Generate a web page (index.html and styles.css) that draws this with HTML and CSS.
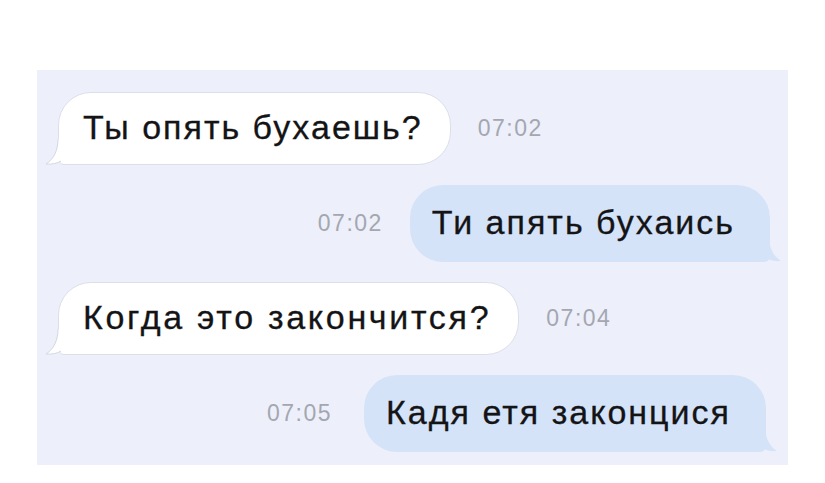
FILE: index.html
```html
<!DOCTYPE html>
<html lang="ru">
<head>
<meta charset="utf-8">
<title>Чат</title>
<link rel="stylesheet" href="styles.css">
</head>
<body>
<div class="panel">
  <div class="row row-in">
    <div class="bubble bubble-in">
      <span class="text">Ты опять бухаешь?</span>
      <svg class="tail tail-in" viewBox="0 0 16 26" aria-hidden="true"><path class="tail-fill" d="M13 0 C13 11 9 20 1 25 C7 25.5 12 24.5 16 22 L16 0 Z"/><path class="tail-line" d="M13 0 C13 11 9 20 1 25 C7 25.5 12 24.5 16 22"/></svg>
    </div>
    <span class="time">07:02</span>
  </div>
  <div class="row row-out">
    <span class="time">07:02</span>
    <div class="bubble bubble-out">
      <span class="text">Ти апять бухаись</span>
      <svg class="tail tail-out" viewBox="0 0 16 26" aria-hidden="true"><path class="tail-fill-out" d="M3 0 C3 11 7 20 15 25 C9 25.5 4 24.5 0 22 L0 0 Z"/></svg>
    </div>
  </div>
  <div class="row row-in">
    <div class="bubble bubble-in">
      <span class="text text-wide">Когда это закончится?</span>
      <svg class="tail tail-in" viewBox="0 0 16 26" aria-hidden="true"><path class="tail-fill" d="M13 0 C13 11 9 20 1 25 C7 25.5 12 24.5 16 22 L16 0 Z"/><path class="tail-line" d="M13 0 C13 11 9 20 1 25 C7 25.5 12 24.5 16 22"/></svg>
    </div>
    <span class="time">07:04</span>
  </div>
  <div class="row row-out row-last">
    <span class="time">07:05</span>
    <div class="bubble bubble-out">
      <span class="text">Кадя етя законцися</span>
      <svg class="tail tail-out" viewBox="0 0 16 26" aria-hidden="true"><path class="tail-fill-out" d="M3 0 C3 11 7 20 15 25 C9 25.5 4 24.5 0 22 L0 0 Z"/></svg>
    </div>
  </div>
</div>
</body>
</html>
```

FILE: styles.css
```css
html, body {
  margin: 0;
  padding: 0;
  background: #ffffff;
}
body {
  font-family: "Liberation Sans", Arial, sans-serif;
  width: 825px;
  height: 483px;
  overflow: hidden;
}
.panel {
  margin: 70px 0 0 37px;
  width: 751px;
  height: 395px;
  box-sizing: border-box;
  background: #edf0fa;
  padding: 22px 18px 15px 21px;
  display: flex;
  flex-direction: column;
  gap: 20px;
}
.row {
  display: flex;
  align-items: center;
  gap: 27px;
}
.row-out {
  justify-content: flex-end;
}
.row-last {
  gap: 32px;
  padding-right: 4px;
}
.bubble {
  position: relative;
  height: 73px;
  box-sizing: border-box;
  border-radius: 33px;
  display: flex;
  align-items: center;
}
.bubble-in {
  background: #ffffff;
  border: 1px solid #dcdfe9;
  border-bottom-left-radius: 6px;
  padding: 0 27px 3px 24px;
}
.bubble-out {
  background: #d5e3f8;
  border-bottom-right-radius: 6px;
  padding: 0 35px 3px 22px;
  height: 77px;
}
.text {
  font-size: 34px;
  color: #141416;
  letter-spacing: 2px;
  white-space: nowrap;
  -webkit-text-stroke: 0.3px #141416;
}
.text-wide {
  letter-spacing: 2.7px;
}
.time {
  font-size: 23px;
  color: #a4a7b0;
  letter-spacing: 1.5px;
  white-space: nowrap;
}
.tail {
  position: absolute;
  bottom: -1px;
  width: 16px;
  height: 26px;
}
.tail-in {
  left: -14px;
}
.tail-out {
  right: -12px;
  bottom: 0;
}
.tail-fill {
  fill: #ffffff;
}
.tail-line {
  fill: none;
  stroke: #d4d7e2;
  stroke-width: 1;
}
.tail-fill-out {
  fill: #d5e3f8;
}
```
